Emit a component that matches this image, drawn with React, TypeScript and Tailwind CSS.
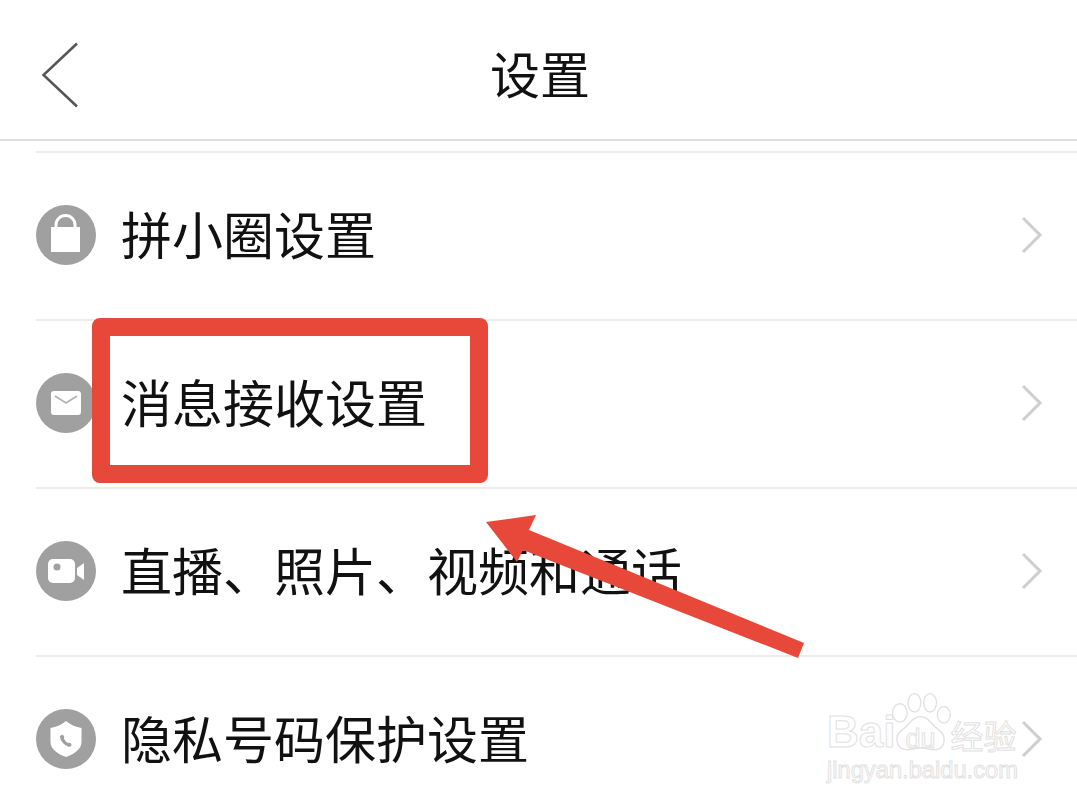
const CJK = "font-['Noto_Sans_CJK_SC','Liberation_Sans',sans-serif]";

function LockIcon() {
  return (
    <svg width="60" height="60" viewBox="0 0 60 60">
      <path d="M20 25v-5a9.500 9.500 0 0 1 19 0v5" fill="none" stroke="#fff" strokeWidth="3" />
      <rect x="15" y="22" width="29" height="25" fill="#fff" />
    </svg>
  );
}

function MailIcon() {
  return (
    <svg width="60" height="60" viewBox="0 0 60 60">
      <rect x="15" y="18" width="30" height="24" rx="3" fill="#fff" />
      <path d="M19 23l11 7 11-7" fill="none" stroke="#b4b4b4" strokeWidth="1.800" />
    </svg>
  );
}

function VideoIcon() {
  return (
    <svg width="60" height="60" viewBox="0 0 60 60">
      <rect x="12" y="18" width="27" height="24" rx="5" fill="#fff" />
      <circle cx="21" cy="26" r="3.500" fill="#a0a0a0" />
      <path d="M41 27l7-5v17l-7-5z" fill="#fff" />
    </svg>
  );
}

function ShieldIcon() {
  return (
    <svg width="60" height="60" viewBox="0 0 60 60">
      <path d="M30 12c5 4 10 6 15.500 7v14c0 7-7 12-15.500 15-8.500-3-15.500-8-15.500-15V19C20 18 25 16 30 12z" fill="#fff" />
      <path d="M25.500 26c2-1 3 2 2.500 3.500 1 2 2 3.500 4 4.500 1.500-.5 3.500 0 3.500 2 0 1.500-2 2-3.500 1.500-4-1.500-7-5-8-9-.3-1 .5-2 1.500-2.500z" fill="#a0a0a0" />
    </svg>
  );
}

const ROWS = [
  { icon: <LockIcon />, label: "拼小圈设置" },
  { icon: <MailIcon />, label: "消息接收设置" },
  { icon: <VideoIcon />, label: "直播、照片、视频和通话" },
  { icon: <ShieldIcon />, label: "隐私号码保护设置" },
];

function Row({ icon, label }: { icon: React.ReactElement; label: string }) {
  return (
    <li className="ml-[36px] flex h-[168px] shrink-0 items-center border-t-2 border-[#ececec] pr-[34px]">
      <div className="mb-[2px] flex h-[60px] w-[60px] shrink-0 items-center justify-center rounded-full bg-[#a0a0a0]">
        {icon}
      </div>
      <span className="ml-[25px] flex-1 pb-[5px] text-[51px] leading-none whitespace-nowrap text-[#111]">
        {label}
      </span>
      <svg className="mb-[2px]" width="22" height="38" viewBox="0 0 22 38">
        <path d="M2 2l17 17L2 36" fill="none" stroke="#cfcfcf" strokeWidth="3" />
      </svg>
    </li>
  );
}

function Watermark() {
  const stroke = "text-transparent [-webkit-text-stroke:1px_#e2e2e2]";
  return (
    <div className={`absolute top-[690px] left-[827px] flex w-[195px] flex-col font-['Liberation_Sans',sans-serif] ${stroke}`}>
      <div className="flex items-end">
        <span className="pb-[2px] text-[44px] leading-none font-bold">Bai</span>
        <div className="relative -ml-[8px] flex h-[66px] w-[66px] shrink-0 items-end justify-center">
          <svg className="absolute inset-0" width="66" height="66" viewBox="0 0 72 66">
            <g fill="#fff" stroke="#e2e2e2" strokeWidth="1.500">
              <ellipse cx="14" cy="22" rx="8" ry="10" />
              <ellipse cx="30" cy="11" rx="7" ry="10" />
              <ellipse cx="47" cy="11" rx="7" ry="10" />
              <ellipse cx="62" cy="24" rx="7" ry="9" />
              <path d="M36 26c-9 0-12 10-20 15-8 5-7 20 5 21 6 .5 10-2 16-2s10 3 17 2c10-2 11-15 3-21-8-5-11-15-21-15z" />
            </g>
          </svg>
          <span className="relative pb-[3px] text-[27px] leading-none">du</span>
        </div>
        <span className={`-ml-[3px] pb-[4px] text-[33px] leading-none whitespace-nowrap ${CJK}`}>经验</span>
      </div>
      <span className="pt-[3px] text-[23.700px] leading-none whitespace-nowrap">jingyan.baidu.com</span>
    </div>
  );
}

export default function App() {
  return (
    <div className={`relative h-[807px] w-[1077px] overflow-hidden bg-white ${CJK}`}>
      <header className="grid h-[141px] grid-cols-[1fr_auto_1fr] items-center border-b-2 border-[#e0e0e0] pl-[41px]">
        <svg className="mt-[10px]" width="38" height="66" viewBox="0 0 38 66">
          <path d="M36 1.500L2.500 33 36 64.500" fill="none" stroke="#555" strokeWidth="2.500" />
        </svg>
        <h1 className="pt-[4px] pr-[38px] text-[50px] leading-none font-normal text-[#111]">设置</h1>
      </header>

      <ul className="mt-[10px] flex flex-col">
        {ROWS.map((r, i) => (
          <Row key={`row-${i}`} icon={r.icon} label={r.label} />
        ))}
      </ul>

      {/* annotations on top of the screenshot */}
      <div className="absolute top-[318px] left-[92px] h-[165px] w-[396px] rounded-[8px] border-[18px] border-[#e8483a]" />
      <svg className="absolute top-0 left-0" width="1077" height="807" viewBox="0 0 1077 807">
        <path d="M486 522L536 515 529 530 804 643 798 658 523 550 517 562z" fill="#e8483a" />
      </svg>
      <Watermark />
    </div>
  );
}
